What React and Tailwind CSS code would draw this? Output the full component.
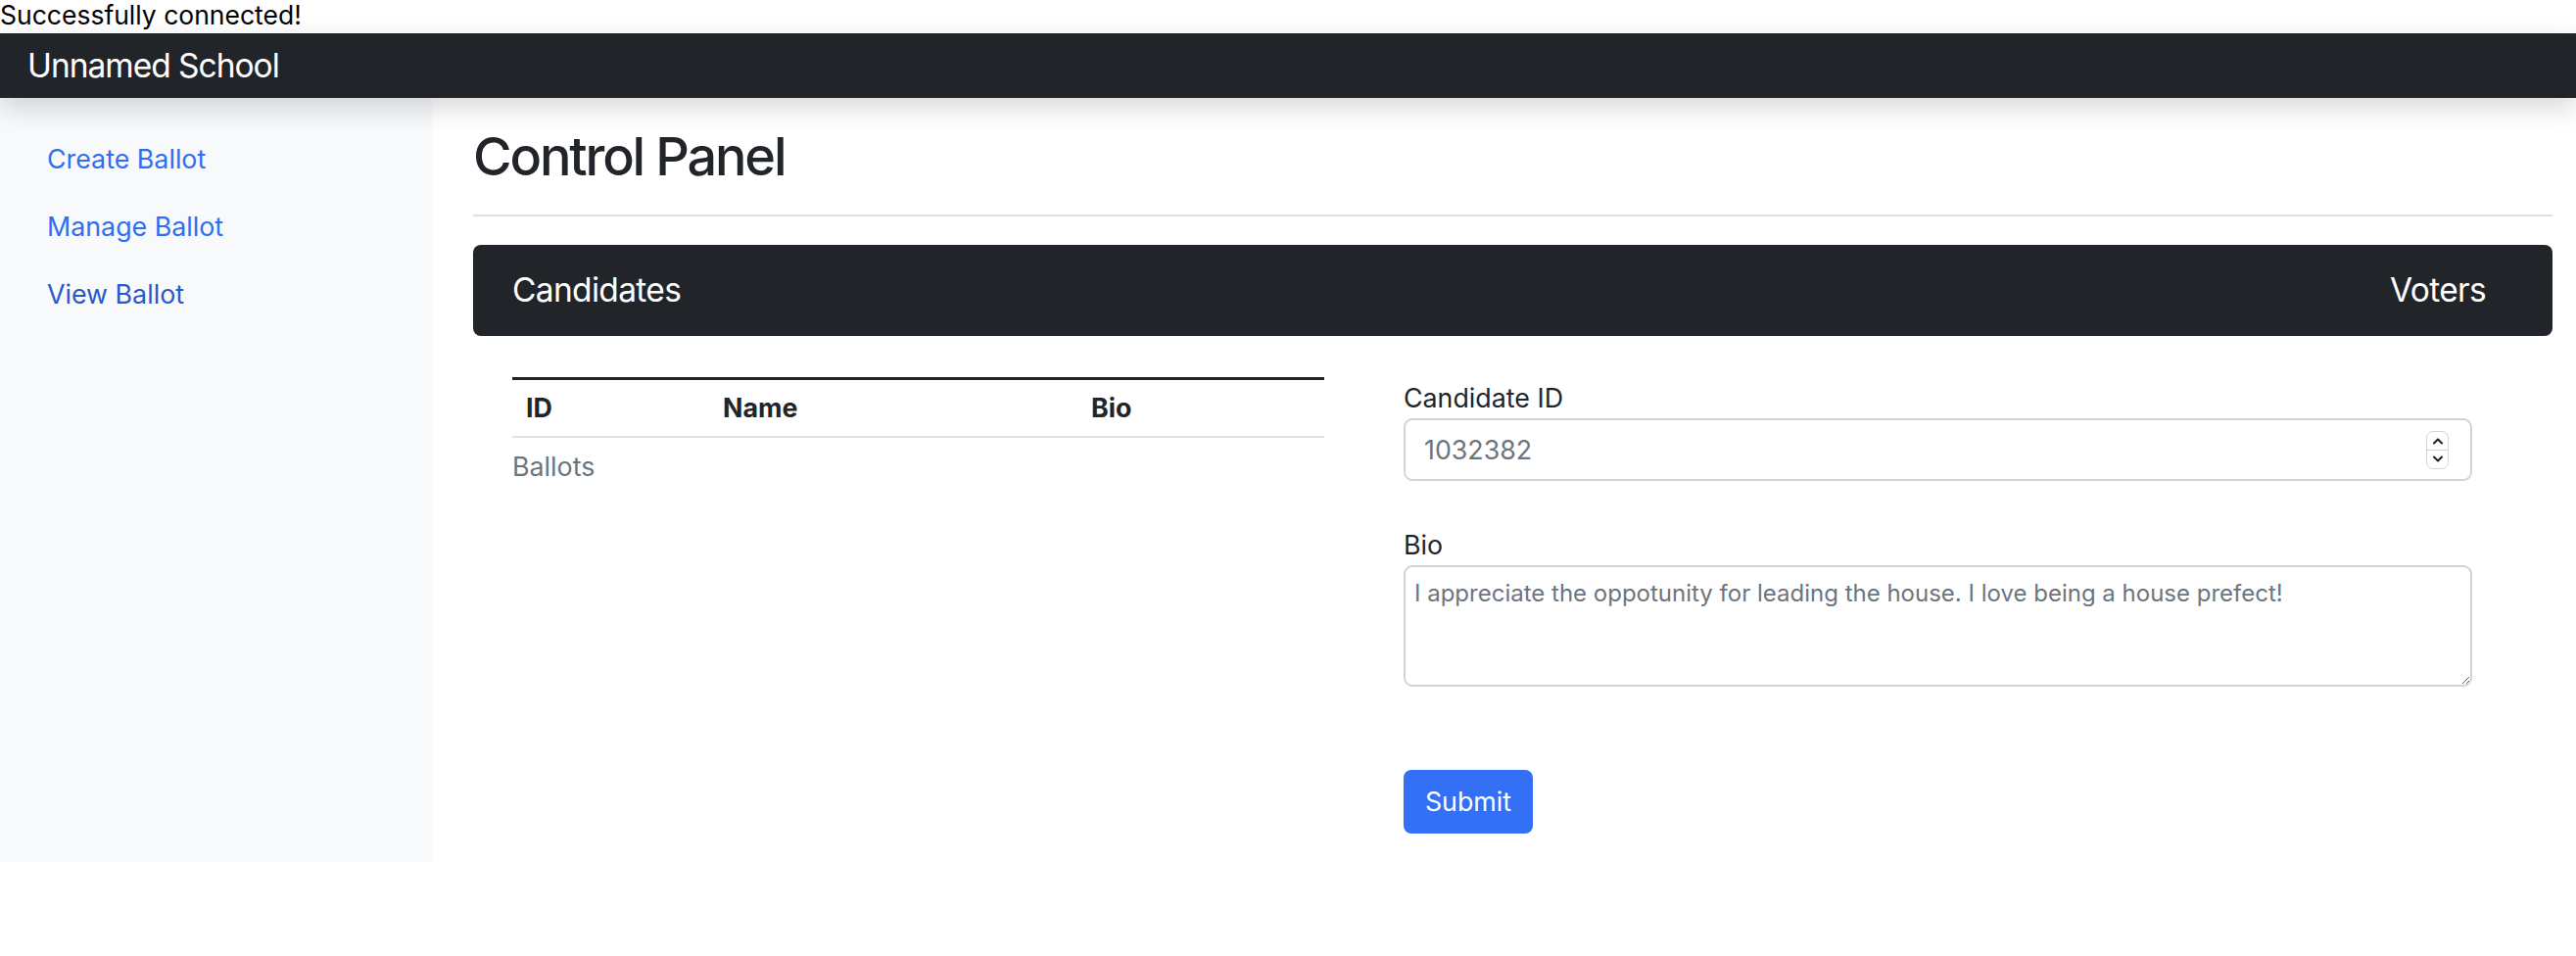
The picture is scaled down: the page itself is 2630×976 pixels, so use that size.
import { useState } from "react";

const NAV_LINKS = [
  { label: "Create Ballot", color: "text-[#2f6ef3]" },
  { label: "Manage Ballot", color: "text-[#2f6ef3]" },
  { label: "View Ballot", color: "text-[#2858c9]" },
];

function Spinner() {
  return (
    <div className="flex h-[39px] w-[23px] flex-col overflow-hidden rounded-[7px] border border-[#d4d4d4] bg-white">
      <div className="flex flex-1 items-center justify-center border-b border-[#d4d4d4]">
        <svg width="12" height="8" viewBox="0 0 12 8" fill="none">
          <path d="M2 6.5 L6 2.5 L10 6.5" stroke="#1f1f1f" strokeWidth="2" strokeLinecap="round" strokeLinejoin="round" />
        </svg>
      </div>
      <div className="flex flex-1 items-center justify-center">
        <svg width="12" height="8" viewBox="0 0 12 8" fill="none">
          <path d="M2 1.5 L6 5.5 L10 1.5" stroke="#1f1f1f" strokeWidth="2" strokeLinecap="round" strokeLinejoin="round" />
        </svg>
      </div>
    </div>
  );
}

function CandidatesTable() {
  return (
    <div className="ml-[40px] w-[829px] shrink-0">
      <div className="flex h-[62px] items-center border-t-[3px] border-b-2 border-t-[#212529] border-b-[#dee2e6] text-[26.8px] font-bold text-[#212529]">
        <div className="w-[202px] pl-[14px]">ID</div>
        <div className="w-[375px] pl-[13px]">Name</div>
        <div className="flex-1 pl-[14px]">Bio</div>
      </div>
      <div className="pt-[9px] text-[26.8px] leading-[40px] text-[#6c757d]">Ballots</div>
    </div>
  );
}

function CandidateForm() {
  const [id, setId] = useState("");
  const [bio, setBio] = useState("");

  return (
    <form className="ml-[81px] flex w-[1091px] shrink-0 flex-col" onSubmit={(e) => e.preventDefault()}>
      <label className="flex h-[42px] items-center text-[26.8px] text-[#212529]">Candidate ID</label>
      <div className="flex h-[64px] items-center rounded-[9px] border-2 border-[#ced4da] pl-[19px] pr-[22px]">
        <input
          type="text"
          value={id}
          onChange={(e) => setId(e.target.value)}
          placeholder="1032382"
          className="flex-1 bg-transparent text-[26.8px] text-[#212529] outline-none placeholder:text-[#6c757d]"
        />
        <Spinner />
      </div>
      <label className="mt-[44px] flex h-[42px] items-center text-[26.8px] text-[#212529]">Bio</label>
      <textarea
        value={bio}
        onChange={(e) => setBio(e.target.value)}
        placeholder="I appreciate the oppotunity for leading the house. I love being a house prefect!"
        className="h-[124px] resize-y rounded-[9px] border-2 border-[#ced4da] pl-[9px] pr-[12px] pt-[10px] text-[24px] leading-[34px] text-[#212529] outline-none placeholder:text-[#6c757d]"
      />
      <button
        type="submit"
        className="mt-[85px] h-[65px] w-[132px] rounded-[8px] bg-[#3370f6] text-[26.8px] text-white"
      >
        Submit
      </button>
    </form>
  );
}

export default function App() {
  return (
    <div className="relative h-[976px] w-[2630px] overflow-hidden bg-white font-['Inter',sans-serif]">
      <div className="h-[34px] text-[26.5px] leading-[31px] text-black">Successfully connected!</div>
      <header className="relative z-10 flex h-[66px] items-center bg-[#212529] pl-[28px] text-[33.5px] tracking-[-0.03em] text-white shadow-[0_10px_28px_rgba(0,0,0,0.16)]">
        Unnamed School
      </header>
      <div className="flex">
        <aside className="flex h-[780px] w-[441px] shrink-0 flex-col bg-[#f8f9fa] pt-[28px]">
          {NAV_LINKS.map((link) => (
            <a key={link.label} href="#" className={`flex h-[69px] items-center pl-[48px] text-[26.8px] ${link.color}`}>
              {link.label}
            </a>
          ))}
        </aside>
        <main className="flex-1 pl-[42px] pr-[24px]">
          <h2 className="flex h-[121px] items-center border-b-2 border-[#dee2e6] text-[54px] font-medium tracking-[-0.04em] text-[#212529]">
            Control Panel
          </h2>
          <div className="mt-[29px] flex h-[93px] items-center justify-between rounded-[8px] bg-[#212529] pl-[40px] pr-[68px] text-[33.5px] tracking-[-0.02em] text-white">
            <span>Candidates</span>
            <span>Voters</span>
          </div>
          <div className="mt-[42px] flex items-start">
            <CandidatesTable />
            <CandidateForm />
          </div>
        </main>
      </div>
    </div>
  );
}
